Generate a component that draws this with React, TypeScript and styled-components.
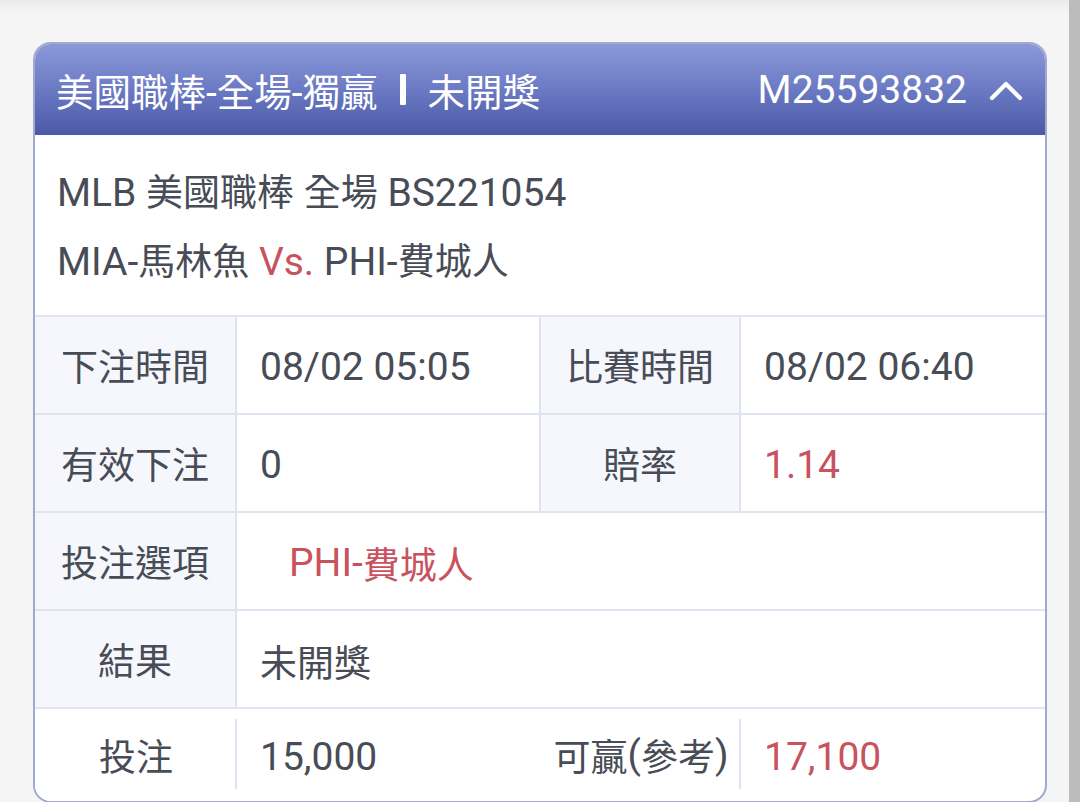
import React from "react";
import styled, { createGlobalStyle } from "styled-components";

const Global = createGlobalStyle`
  html, body { margin: 0; padding: 0; }
  body {
    width: 1080px;
    height: 802px;
    overflow: hidden;
    background: #f5f5f5;
    font-family: Roboto, "Noto Sans CJK TC", "Noto Sans", sans-serif;
  }
`;

const Page = styled.div`
  display: flex;
  width: 1080px;
  height: 802px;
`;

const Main = styled.main`
  flex: 1;
  padding: 42px 22px 0 33px;
  background: linear-gradient(#ebebeb 0px, #f5f5f5 12px, #f5f5f5 100%);
  overflow: hidden;
`;

const ScrollStrip = styled.div`
  width: 11px;
  background: #bcbcbc;
`;

const Card = styled.section`
  border: 2px solid #a2a9cf;
  border-radius: 18px;
  overflow: hidden;
  background: #fff;
`;

const Header = styled.header`
  height: 91px;
  display: flex;
  align-items: center;
  justify-content: space-between;
  padding: 0 22px 0 21px;
  background: linear-gradient(#8b99d9 0%, #6e7dc6 45%, #4b59a7 100%);
  color: #fff;
  font-size: 37.5px;
`;

const HeaderTitle = styled.div`
  display: flex;
  align-items: center;
  gap: 22px;
`;

const Bar = styled.span`
  width: 6px;
  height: 31px;
  background: #fff;
  border-radius: 1px;
`;

const HeaderRight = styled.div`
  display: flex;
  align-items: center;
  gap: 22px;
`;

const Latin = styled.span`
  font-family: Roboto, sans-serif;
  font-size: 39px;
`;

const Info = styled.div`
  padding: 24px 22px 18px 22px;
  font-size: 37px;
  color: #474c56;
  line-height: 68px;
  border-bottom: 2px solid #dfe3f2;
`;

const Red = styled.span`
  color: #c9525f;
`;

const Row = styled.div<{ $last?: boolean }>`
  display: grid;
  grid-template-columns: 202px 304px 200px 1fr;
  height: ${(p) => (p.$last ? "92px" : "98px")};
  border-bottom: ${(p) => (p.$last ? "none" : "2px solid #dfe3f2")};
  box-sizing: border-box;
`;

const insetDivider = `
  background-image: linear-gradient(#dfe3f2, #dfe3f2);
  background-repeat: no-repeat;
  background-size: 2px calc(100% - 22px);
  background-position: right 10px;
`;

const Label = styled.div<{ $plain?: boolean; $inset?: boolean }>`
  display: flex;
  align-items: center;
  justify-content: center;
  font-size: 37px;
  color: #474c56;
  background-color: ${(p) => (p.$plain ? "#fff" : "#f6f7fc")};
  border-right: ${(p) => (p.$inset ? "none" : "2px solid #dfe3f2")};
  ${(p) => (p.$inset ? insetDivider : "")}
`;

const Value = styled.div<{ $red?: boolean; $span?: boolean; $indent?: number; $noBorder?: boolean }>`
  display: flex;
  align-items: center;
  padding-left: ${(p) => p.$indent ?? 23}px;
  padding-top: 3px;
  font-size: 37px;
  color: ${(p) => (p.$red ? "#c9525f" : "#474c56")};
  grid-column: ${(p) => (p.$span ? "2 / -1" : "auto")};
  border-right: ${(p) => (p.$noBorder || p.$span ? "none" : "2px solid #dfe3f2")};
`;

/* splits text into ASCII and CJK runs so Latin glyphs get their own size */
const T = ({ children }: { children: string }) => {
  const parts = children.match(/[\x00-\x7F]+|[^\x00-\x7F]+/g) || [];
  return (
    <>
      {parts.map((p, i) =>
        /^[\x00-\x7F]+$/.test(p) ? <Latin key={i}>{p}</Latin> : <React.Fragment key={i}>{p}</React.Fragment>
      )}
    </>
  );
};

const Chevron = () => (
  <svg width="34" height="24" viewBox="0 0 34 24" fill="none">
    <polyline
      points="3,20 17,6 31,20"
      stroke="#fff"
      strokeWidth="4.2"
      strokeLinecap="round"
      strokeLinejoin="round"
    />
  </svg>
);

export default function App() {
  return (
    <>
      <Global />
      <Page>
        <Main>
          <Card>
            <Header>
              <HeaderTitle>
                <span><T>美國職棒-全場-獨贏</T></span>
                <Bar />
                <span>未開獎</span>
              </HeaderTitle>
              <HeaderRight>
                <Latin>M25593832</Latin>
                <Chevron />
              </HeaderRight>
            </Header>
            <Info>
              <div><T>MLB 美國職棒 全場 BS221054</T></div>
              <div>
                <T>MIA-馬林魚 </T>
                <Red><T>Vs.</T></Red>
                <T> PHI-費城人</T>
              </div>
            </Info>
            <Row>
              <Label>下注時間</Label>
              <Value><T>08/02 05:05</T></Value>
              <Label>比賽時間</Label>
              <Value $noBorder><T>08/02 06:40</T></Value>
            </Row>
            <Row>
              <Label>有效下注</Label>
              <Value><T>0</T></Value>
              <Label>賠率</Label>
              <Value $red $noBorder><T>1.14</T></Value>
            </Row>
            <Row>
              <Label>投注選項</Label>
              <Value $span $red $indent={52}><T>PHI-費城人</T></Value>
            </Row>
            <Row>
              <Label>結果</Label>
              <Value $span>未開獎</Value>
            </Row>
            <Row $last>
              <Label $plain $inset>投注</Label>
              <Value $noBorder><T>15,000</T></Value>
              <Label $plain $inset><T>可贏(參考)</T></Label>
              <Value $red $noBorder><T>17,100</T></Value>
            </Row>
          </Card>
        </Main>
        <ScrollStrip />
      </Page>
    </>
  );
}
